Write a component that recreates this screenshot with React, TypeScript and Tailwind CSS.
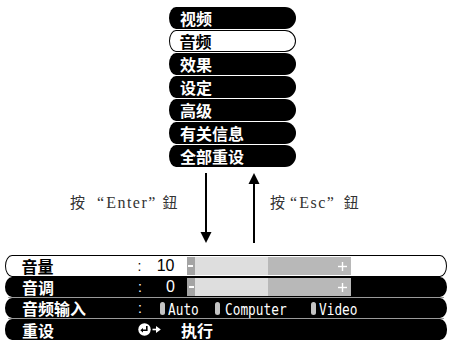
import React from "react";

const cjk = "font-['Noto_Sans_CJK_SC','Noto_Sans',sans-serif]";
const serif = "font-['Liberation_Serif','Noto_Sans_CJK_SC',serif]";

function MenuItem({ label, selected }: { label: string; selected?: boolean }) {
  return selected ? (
    <div className="h-[22px] flex items-center pl-[9.5px] bg-white text-black border-[1.5px] border-black rounded-l-[7px_11px] rounded-r-[11px] text-[16px] font-bold leading-none">
      {label}
    </div>
  ) : (
    <div className="h-[22px] flex items-center pl-[11px] bg-black text-white rounded-l-[7px_11px] rounded-r-[11px] text-[16px] font-bold leading-none">
      {label}
    </div>
  );
}

function Bar() {
  return (
    <div className="ml-[12px] flex h-[18px]">
      <div className="w-[8px] bg-[#a4a4a4] flex items-center justify-center">
        <div className="w-[5px] h-[2px] bg-white" />
      </div>
      <div className="w-[73px] bg-[#dedede]" />
      <div className="w-[83px] bg-[#b8b8b8] flex items-center justify-end pr-[4px]">
        <svg width="9" height="9" viewBox="0 0 9 9">
          <rect x="3.8" y="0" width="1.4" height="9" fill="#fff" />
          <rect x="0" y="3.8" width="9" height="1.4" fill="#fff" />
        </svg>
      </div>
    </div>
  );
}

function Pill() {
  return <div className="w-[5px] h-[13px] rounded-full bg-[#c4c4c4]" />;
}

function Mono({ text, w }: { text: string; w: number }) {
  return (
    <div className="overflow-visible" style={{ width: w }}>
      <div className="inline-block origin-left scale-x-[0.8] text-[16px] font-['DejaVu_Sans_Mono',monospace] leading-none whitespace-nowrap">
        {text}
      </div>
    </div>
  );
}

export default function App() {
  return (
    <div className={`w-[449px] h-[340px] bg-white overflow-hidden ${cjk}`}>
      {/* top menu */}
      <div className="ml-[169px] pt-[7px] w-[127px] flex flex-col gap-[1px]">
        <MenuItem label="视频" />
        <MenuItem label="音频" selected />
        <MenuItem label="效果" />
        <MenuItem label="设定" />
        <MenuItem label="高级" />
        <MenuItem label="有关信息" />
        <MenuItem label="全部重设" />
      </div>

      {/* arrows */}
      <div className="h-[88px] flex items-center">
        <div className={`ml-[70px] w-[130px] mb-[16px] flex items-center text-[#333] ${serif} whitespace-nowrap leading-none`}>
          <span className="text-[15px]">按</span>
          <span className="ml-[12px] text-[16px]">“</span>
          <span className="ml-[2px] text-[16px] tracking-[1.5px]">Enter</span>
          <span className="text-[16px]">”</span>
          <span className="ml-[7px] text-[15px]">鈕</span>
        </div>
        <svg width="12" height="88" viewBox="0 0 12 88" className="block">
          <rect x="5" y="6" width="2" height="66" fill="#000" />
          <polygon points="0.5,65 11.5,65 6,76" fill="#000" />
        </svg>
        <div className="w-[36px]" />
        <svg width="12" height="88" viewBox="0 0 12 88" className="block">
          <rect x="5" y="14" width="2" height="62" fill="#000" />
          <polygon points="0.5,17 11.5,17 6,6" fill="#000" />
        </svg>
        <div className={`ml-[10px] mb-[16px] flex items-center text-[#333] ${serif} whitespace-nowrap leading-none`}>
          <span className="text-[15px]">按</span>
          <span className="ml-[5px] text-[16px]">“</span>
          <span className="ml-[2px] text-[16px] tracking-[1.5px]">Esc</span>
          <span className="text-[16px]">”</span>
          <span className="ml-[10px] text-[15px]">鈕</span>
        </div>
      </div>

      {/* table */}
      <div className="ml-[5px] w-[442px] flex flex-col">
        <div className="h-[22px] flex items-center bg-white text-black border-[1.5px] border-black rounded-l-[7px_11px] rounded-r-[7px_11px] pl-[15.5px]">
          <div className="w-[116px] text-[16px] font-bold leading-none">音量</div>
          <div className="w-[6px] text-[14px] font-['Liberation_Sans',sans-serif] leading-none">:</div>
          <div className="w-[31px] text-right text-[16px] font-['Liberation_Sans',sans-serif] leading-none">10</div>
          <Bar />
        </div>
        <div className="h-[20px] flex items-center bg-black text-white rounded-l-[7px_10px] rounded-r-[7px_10px] pl-[17px]">
          <div className="w-[116px] text-[16px] font-bold leading-none">音调</div>
          <div className="w-[6px] text-[14px] font-['Liberation_Sans',sans-serif] leading-none">:</div>
          <div className="w-[31px] text-right text-[16px] font-['Liberation_Sans',sans-serif] leading-none">0</div>
          <Bar />
        </div>
        <div className="h-[1px] mx-[3px] bg-[#9a9a9a]" />
        <div className="h-[20px] flex items-center bg-black text-white rounded-l-[7px_10px] rounded-r-[7px_10px] pl-[17px]">
          <div className="w-[116px] text-[16px] font-bold leading-none">音频输入</div>
          <div className="w-[6px] text-[14px] font-['Liberation_Sans',sans-serif] leading-none">:</div>
          <div className="ml-[16px]"><Pill /></div>
          <div className="ml-[3px]"><Mono text="Auto" w={31} /></div>
          <div className="ml-[16px]"><Pill /></div>
          <div className="ml-[5px]"><Mono text="Computer" w={62} /></div>
          <div className="ml-[24px]"><Pill /></div>
          <div className="ml-[3px]"><Mono text="Video" w={40} /></div>
        </div>
        <div className="h-[1px] mx-[3px] bg-[#9a9a9a]" />
        <div className="h-[21px] flex items-center bg-black text-white rounded-l-[7px_10px] rounded-r-[7px_10px] pl-[17px]">
          <div className="w-[116px] text-[16px] font-bold leading-none">重设</div>
          <svg width="13" height="13" viewBox="0 0 13 13" className="block">
            <circle cx="6.5" cy="6.5" r="6.2" fill="#fff" />
            <path d="M8.8 3 V7.3 H4.5" stroke="#000" strokeWidth="1.6" fill="none" />
            <polygon points="2.3,7.3 5,5 5,9.6" fill="#000" />
          </svg>
          <svg width="9" height="9" viewBox="0 0 9 9" className="block ml-[1px]">
            <rect x="0.5" y="3.7" width="4" height="1.6" fill="#fff" />
            <polygon points="4,1 8.8,4.5 4,8" fill="#fff" />
          </svg>
          <div className="ml-[20px] text-[16px] font-bold leading-none">执行</div>
        </div>
      </div>
    </div>
  );
}
